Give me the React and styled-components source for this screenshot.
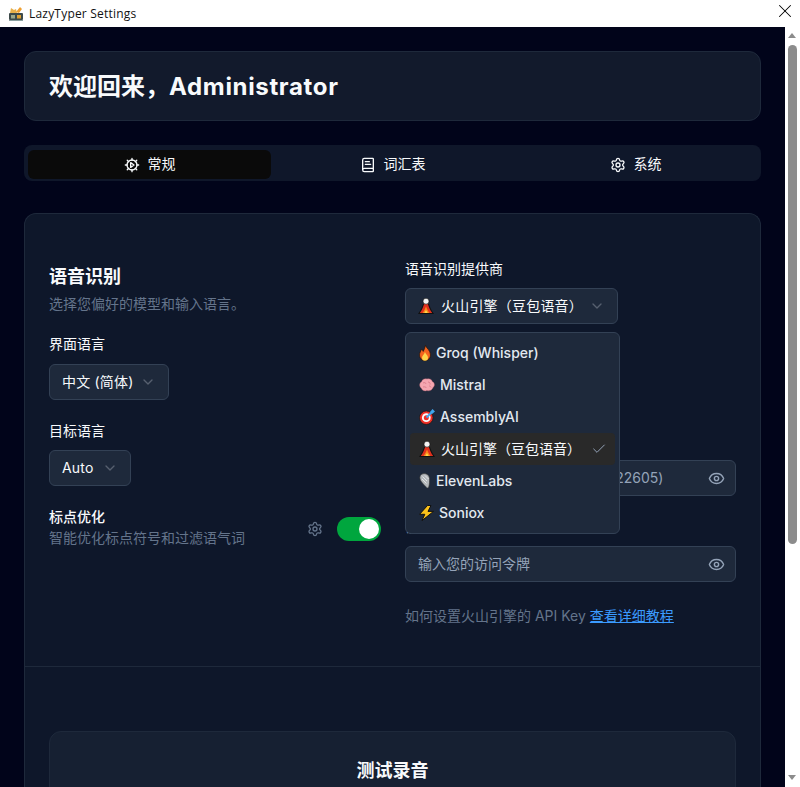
import React from "react";
import styled, { createGlobalStyle } from "styled-components";
import { BookText, Check, ChevronDown, Eye, Settings, X } from "lucide-react";

const Global = createGlobalStyle`
  html, body { margin: 0; padding: 0; height: 100%; overflow: hidden; background: #fff; }
  * { box-sizing: border-box; }
  body { font-family: Inter, "Noto Sans CJK SC", sans-serif; }
`;

const Window = styled.div`display: flex; flex-direction: column; width: 800px; height: 787px; overflow: hidden;`;
const TitleBar = styled.header`
  flex: 0 0 27px; display: flex; align-items: center; padding-left: 8px; gap: 5px; background: #fff; position: relative;
  font: 12px/1 "Open Sans", "Noto Sans", sans-serif; color: #111; letter-spacing: 0.2px;
`;
const CloseBtn = styled.span`position: absolute; right: 4px; top: 0; width: 22px; height: 22px; display: flex; align-items: center; justify-content: center; color: #000;`;
const Body = styled.div`flex: 1; display: flex; min-height: 0;`;
const Main = styled.main`
  width: 785px; padding: 24px 24px 0; background: #01041a; overflow: hidden; display: flex; flex-direction: column; color: #f8fafc;
`;
const Hero = styled.section`
  flex: 0 0 70px; display: flex; align-items: center; padding: 1px 24px 0; border-radius: 12px; background: #121a2c; border: 1px solid #1e293b; margin-bottom: 24px;
`;
const HeroTitle = styled.h1`margin: 0; font-size: 24px; line-height: 32px; font-weight: 700; color: #f8fafc;`;
const HeroName = styled.span`letter-spacing: 0.66px;`;
const Tabs = styled.nav`
  flex: 0 0 36px; display: grid; grid-template-columns: repeat(3, 1fr); padding: 5px 4px 2px; border-radius: 8px; background: #0f172a; margin-bottom: 32px;
`;
const Tab = styled.div`
  display: flex; align-items: center; justify-content: center; gap: 8px; border-radius: 6px; font-size: 14px; font-weight: 400; color: #f8fafc;
  background: ${p => (p.$active ? "#0a0a0a" : "transparent")};
`;
const TabLabel = styled.span`padding-bottom: 3px;`;
const Card = styled.section`
  flex: none; border-radius: 12px 12px 0 0; background: #0e172a; border: 1px solid #1e293b; border-bottom: none; height: 600px;
`;
const Columns = styled.div`display: grid; grid-template-columns: 332px 331px; gap: 24px; padding: 45px 24px 0; height: 453px; border-bottom: 1px solid #1e293b;`;
const Col = styled.div`display: flex; flex-direction: column; position: relative;`;
const Heading = styled.h2`margin: 0; padding-top: 6px; font-size: 18px; line-height: 24px; font-weight: 700; color: #f8fafc;`;
const Sub = styled.p`margin: 5px 0 0; font-size: 14px; line-height: 20px; color: #64748b;`;
const Label = styled.label`display: block; font-size: 14px; line-height: 20px; font-weight: 400; color: #f8fafc; margin-top: ${p => p.$mt || 0}px;`;
const Select = styled.div`
  display: inline-flex; align-self: flex-start; align-items: center; justify-content: space-between; height: 36px; width: ${p => p.$w}px; margin-top: ${p => p.$mt}px;
  padding: 0 12px; border-radius: 6px; background: #1e293b; border: 1px solid #334155; font-size: 14px; color: #f8fafc; letter-spacing: 0.2px;
`;
const SelectValue = styled.span`display: inline-flex; align-items: center; gap: 7px; white-space: nowrap;`;
const RaisedText = styled.span`padding-bottom: 2px;`;
const Chevron = styled(ChevronDown)`color: #57606f; flex: none;`;
const ToggleRow = styled.div`display: flex; align-items: flex-start; justify-content: space-between; margin-top: 21px;`;
const ToggleText = styled.div`display: flex; flex-direction: column; gap: 1px;`;
const ToggleTitle = styled.span`font-size: 14px; line-height: 20px; font-weight: 500; color: #f8fafc;`;
const ToggleSub = styled.span`font-size: 14px; line-height: 20px; color: #64748b;`;
const ToggleCtl = styled.div`display: flex; align-items: center; gap: 14px; margin-top: 10px;`;
const Gear = styled(Settings)`color: #64748b;`;
const Switch = styled.div`width: 44px; height: 24px; border-radius: 12px; background: #00a63e; display: flex; justify-content: flex-end; align-items: center; padding: 2px;`;
const Thumb = styled.span`width: 20px; height: 20px; border-radius: 50%; background: #fff;`;
const Field = styled.div`
  height: 36px; margin-top: ${p => p.$mt}px; display: flex; align-items: center; justify-content: space-between; padding: 0 10px 0 12px; border-radius: 6px;
  background: #1e293b; border: 1px solid #334155; font-size: 14px; color: #94a3b8; white-space: nowrap;
`;
const FieldEye = styled(Eye)`color: #94a3b8; flex: none;`;
const Help = styled.p`margin: 24px 0 0; font-size: 14px; line-height: 20px; color: #64748b;`;
const HelpLink = styled.a`color: #3b9bff; text-decoration: underline;`;
const Menu = styled.div`
  position: absolute; left: 0; top: 73px; width: 215px; padding: 4px; border-radius: 6px; background: #1e293b; border: 1px solid #334155; z-index: 2;
`;
const Item = styled.div`
  height: 32px; display: flex; align-items: center; justify-content: space-between; padding: 0 8px 0 9px; border-radius: 4px; font-size: 14px;
  background: ${p => (p.$selected ? "#292929" : "transparent")}; color: ${p => (p.$selected ? "#f8fafc" : "#e2e8f0")};
`;
const ItemMain = styled.span`display: inline-flex; align-items: center; gap: ${p => p.$gap}px; white-space: nowrap; font-weight: ${p => (p.$selected ? 400 : 500)};`;
const ItemCheck = styled(Check)`color: #94a3b8;`;
const TestWrap = styled.div`padding: 64px 24px 0;`;
const TestCard = styled.div`height: 200px; border-radius: 12px; background: #162032; border: 1px solid #1e293b; padding-top: 26px; text-align: center;`;
const TestTitle = styled.h3`margin: 0; font-size: 18px; line-height: 26px; font-weight: 700; color: #f8fafc;`;
const Scrollbar = styled.aside`flex: 0 0 15px; background: #fff; position: relative; display: flex; flex-direction: column; align-items: center;`;
const ThumbBar = styled.div`position: absolute; top: 18px; left: 3px; width: 9px; height: 499px; border-radius: 5px; background: #8c8c8c;`;
const ArrowUp = styled.span`position: absolute; top: 6px; left: 3px; border-left: 4.5px solid transparent; border-right: 4.5px solid transparent; border-bottom: 5px solid #8c8c8c;`;
const ArrowDown = styled.span`position: absolute; bottom: 7px; left: 3px; border-left: 4.5px solid transparent; border-right: 4.5px solid transparent; border-top: 5px solid #8c8c8c;`;

const AppIcon = () => (
  <svg width="16" height="16" viewBox="0 0 16 16">
    <path d="M2 7l1-5 3 2 2-1 1 4z" fill="#e8b04a" />
    <path d="M8 6l4-5 2 2-3 4z" fill="#f0a030" />
    <rect x="1" y="7" width="14" height="7" rx="1" fill="#3d4a4a" />
    <rect x="3" y="9" width="4" height="3.500" fill="#9aa68a" />
    <rect x="9" y="9" width="4" height="3.500" fill="#e0a030" />
    <rect x="1" y="14" width="14" height="1" fill="#8aa0a0" />
  </svg>
);
const GearPlay = () => (
  <svg width="16" height="16" viewBox="0 0 24 24" fill="none" stroke="currentColor" strokeWidth="2" strokeLinecap="round" strokeLinejoin="round">
    <path d="M12 2v3M12 19v3M4.900 4.900l2.100 2.100M17 17l2.100 2.100M2 12h3M19 12h3M4.900 19.100L7 17M17 7l2.100-2.100" />
    <circle cx="12" cy="12" r="7.500" />
    <path d="M10 8.500l5 3.500-5 3.500z" />
  </svg>
);
const Volcano = () => (
  <svg width="16" height="16" viewBox="0 0 16 16">
    <path d="M0 16C3 12 4.500 8 5.500 4.500h5C11.500 8 13 12 16 16z" fill="#111" />
    <path d="M1.800 15C4 12 5.500 8.500 6.200 5.500h3.600C10.500 8.500 12 12 14.200 15z" fill="#e0301e" />
    <path d="M4.500 15C6 13 7.300 10.500 8 8.500c.7 2 2 4.500 3.500 6.500z" fill="#f98a1b" />
    <path d="M6.300 15l1.700-3 1.700 3z" fill="#ffd54a" />
    <circle cx="8" cy="3.200" r="3" fill="#f4f4f4" stroke="#111" strokeWidth=".6" />
  </svg>
);
const Flame = () => (
  <svg width="12" height="16" viewBox="0 0 12 16">
    <path d="M6.500.3c.6 3 5 4.700 5 9.700A5.500 5.700 0 0 1 .5 10c0-2.500 1.500-4 2-5.800 1 .8 1.500 1.500 1.700 2.200C5.200 4.500 6.200 2.500 6.500.3z" fill="#f4641e" stroke="#2a1206" strokeWidth=".7" />
    <path d="M6 7c.6 2.200 3 3.300 3 5.700A3 3 0 0 1 3 12.700C3 10.500 5.500 9.300 6 7z" fill="#ffd54a" />
  </svg>
);
const Brain = () => (
  <svg width="16" height="14" viewBox="0 0 16 14">
    <path d="M2.800 3.500C3 1.300 6 .3 8 1c2-.8 5 .3 5.200 2.500 2.500 1 3 4.500.8 6-.5 2.500-4 4-6 3-2 1-5 0-5.800-2.500C0 8.500 .2 4.800 2.800 3.500z" fill="#f4a6b0" stroke="#b8606f" strokeWidth=".4" />
    <path d="M4 5c1.500-1 3 0 3 1M9 4c1.500 0 2.500 1 2 2.500M4 9c1.500-.5 3 0 3.500 1M10 8c1 0 2 .5 2 1.500" fill="none" stroke="#d97a89" strokeWidth=".9" />
  </svg>
);
const Target = () => (
  <svg width="16" height="16" viewBox="0 0 16 16">
    <circle cx="7.300" cy="8.700" r="6.800" fill="#ee2e24" stroke="#1a1a1a" strokeWidth=".8" />
    <circle cx="7.300" cy="8.700" r="4.400" fill="#fafafa" />
    <circle cx="7.300" cy="8.700" r="2.500" fill="#ee2e24" />
    <path d="M7.500 8.500l5.500-5.500" stroke="#3fa7ee" strokeWidth="2" />
    <path d="M11 3l2.500-3 2.500 2.500-3 2.500z" fill="#3fa7ee" />
  </svg>
);
const Mic = () => (
  <svg width="12" height="16" viewBox="0 0 12 16">
    <path d="M.8 4.500C.8 1.800 3.500.3 6 .6c2.800.4 4.600 2.700 4.600 5.200 0 2.700 0 5.200-.8 8.200-.3 1.100-1.700 1.400-2.300.4C5.500 12 .8 8.500.8 4.500z" fill="#b4b8bb" stroke="#333" strokeWidth=".7" />
    <path d="M3.500 3.500l4.500 4.500M3 6l4.500 4.500M6 2.500l3.500 3.500" stroke="#e6e6e6" strokeWidth=".9" />
  </svg>
);
const Bolt = () => (
  <svg width="15" height="16" viewBox="0 0 15 16">
    <path d="M8.500.5L.6 9.300h5.200L3 15.600 14.500 6.400H9L12 .5z" fill="#fcc21b" stroke="#111" strokeWidth="1" strokeLinejoin="round" />
  </svg>
);

const providers = [
  { name: "Groq (Whisper)", icon: <Flame />, gap: 5 },
  { name: "Mistral", icon: <Brain />, gap: 5 },
  { name: "AssemblyAI", icon: <Target />, gap: 5 },
  { name: "火山引擎（豆包语音）", icon: <Volcano />, selected: true, gap: 6 },
  { name: "ElevenLabs", icon: <Mic />, gap: 5 },
  { name: "Soniox", icon: <Bolt />, gap: 5 },
];

export default function App() {
  return (
    <Window>
      <Global />
      <TitleBar>
        <AppIcon />
        LazyTyper Settings
        <CloseBtn><X size={22} strokeWidth={1.100} /></CloseBtn>
      </TitleBar>
      <Body>
        <Main>
          <Hero><HeroTitle>欢迎回来，<HeroName>Administrator</HeroName></HeroTitle></Hero>
          <Tabs>
            <Tab $active><GearPlay /><TabLabel>常规</TabLabel></Tab>
            <Tab><BookText size={16} /><TabLabel>词汇表</TabLabel></Tab>
            <Tab><Settings size={16} /><TabLabel>系统</TabLabel></Tab>
          </Tabs>
          <Card>
            <Columns>
              <Col>
                <Heading>语音识别</Heading>
                <Sub>选择您偏好的模型和输入语言。</Sub>
                <Label $mt={20}>界面语言</Label>
                <Select $w={120} $mt={10}>
                  <SelectValue><RaisedText>中文 (简体)</RaisedText></SelectValue>
                  <Chevron size={16} />
                </Select>
                <Label $mt={21}>目标语言</Label>
                <Select $w={82} $mt={9}>
                  <SelectValue><RaisedText>Auto</RaisedText></SelectValue>
                  <Chevron size={16} />
                </Select>
                <ToggleRow>
                  <ToggleText>
                    <ToggleTitle>标点优化</ToggleTitle>
                    <ToggleSub>智能优化标点符号和过滤语气词</ToggleSub>
                  </ToggleText>
                  <ToggleCtl>
                    <Gear size={16} />
                    <Switch><Thumb /></Switch>
                  </ToggleCtl>
                </ToggleRow>
              </Col>
              <Col>
                <Label>语音识别提供商</Label>
                <Select $w={213} $mt={9}>
                  <SelectValue><Volcano /><RaisedText>火山引擎（豆包语音）</RaisedText></SelectValue>
                  <Chevron size={16} />
                </Select>
                <Menu>
                  {providers.map(p => (
                    <Item key={p.name} $selected={p.selected}>
                      <ItemMain $gap={p.gap} $selected={p.selected}>{p.icon}<RaisedText>{p.name}</RaisedText></ItemMain>
                      {p.selected && <ItemCheck size={16} strokeWidth={1.5} />}
                    </Item>
                  ))}
                </Menu>
                <Label $mt={108}>应用 ID</Label>
                <Field $mt={8}>
                  <RaisedText>请输入您的应用 ID (例如 1234522605)</RaisedText>
                  <FieldEye size={17} />
                </Field>
                <Label $mt={21}>访问令牌</Label>
                <Field $mt={9}>
                  <RaisedText>输入您的访问令牌</RaisedText>
                  <FieldEye size={17} />
                </Field>
                <Help>如何设置火山引擎的 API Key <HelpLink>查看详细教程</HelpLink></Help>
              </Col>
            </Columns>
            <TestWrap>
              <TestCard><TestTitle>测试录音</TestTitle></TestCard>
            </TestWrap>
          </Card>
        </Main>
        <Scrollbar>
          <ArrowUp />
          <ThumbBar />
          <ArrowDown />
        </Scrollbar>
      </Body>
    </Window>
  );
}
